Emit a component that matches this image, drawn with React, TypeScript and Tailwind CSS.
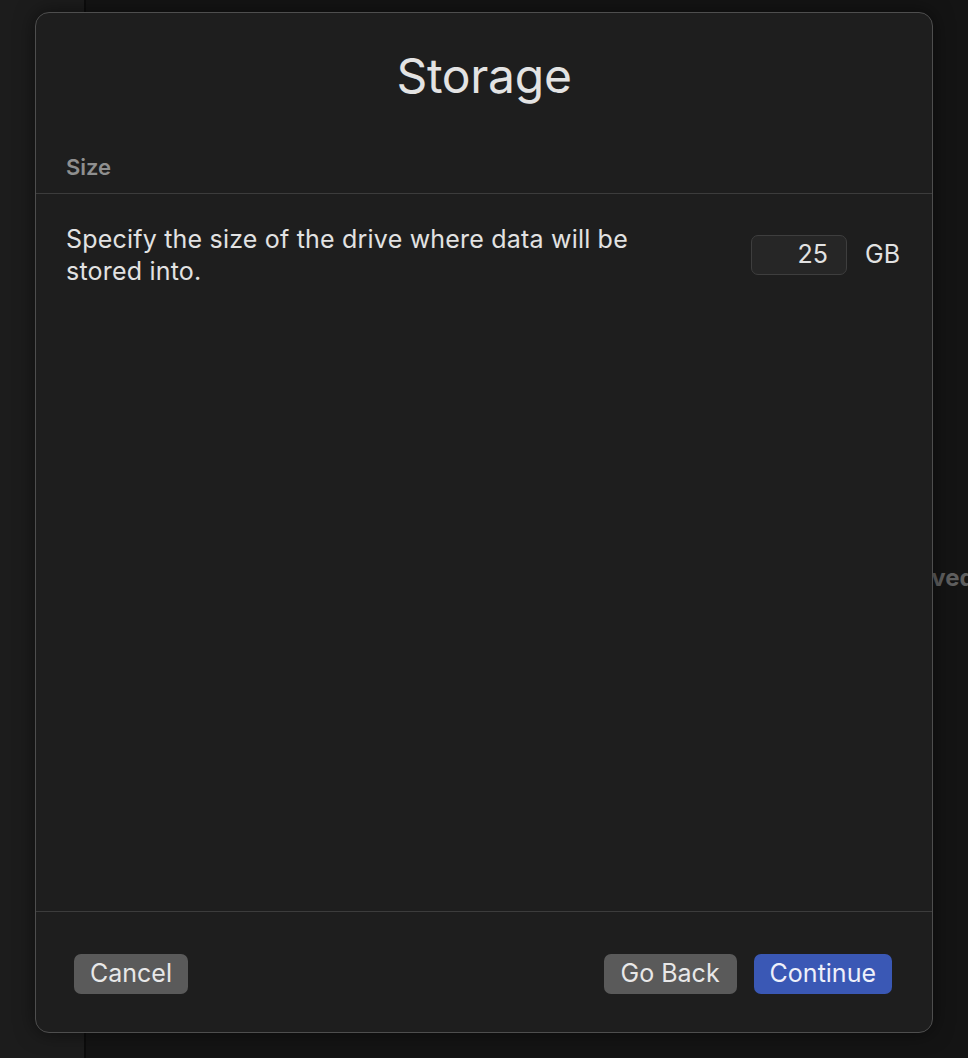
export default function App() {
  const font = { fontFamily: 'Inter, "Noto Sans", sans-serif' };
  return (
    <div className="relative w-[968px] h-[1058px] overflow-hidden bg-[#141414]" style={font}>
      <div className="flex h-full">
        <div className="w-[84px] h-full bg-[#1c1c1c]" />
        <div className="w-[2px] h-full bg-[#0c0c0c]" />
        <div className="flex-1 h-full relative">
          <span className="absolute left-[816px] top-[563px] text-[24px] leading-[30px] font-bold text-[#5f5f5f] whitespace-nowrap">Saved</span>
        </div>
      </div>

      <div className="absolute left-[35px] top-[12px] w-[898px] h-[1021px] rounded-[14px] border border-[#4e4e4e] bg-[#1e1e1e] flex flex-col shadow-[0_0_20px_rgba(0,0,0,0.5)]">
        <div className="flex justify-center pt-[39px]">
          <h1 className="text-[48px] leading-[48px] text-[#e3e3e3] tracking-[-0.3px]">Storage</h1>
        </div>
        <div className="px-[30px] pt-[53px] pb-[12px]">
          <span className="block text-[22px] leading-[28px] font-semibold text-[#8f8f8f]">Size</span>
        </div>
        <div className="h-px bg-[#3c3c3c]" />
        <div className="flex-1">
          <div className="flex items-center justify-between px-[30px] pt-[29px]">
            <p className="w-[590px] text-[25px] leading-[32px] tracking-[0.2px] text-[#e2e2e2]">
              Specify the size of the drive where data will be stored into.
            </p>
            <div className="flex items-center gap-[18px]">
              <div className="w-[96px] h-[40px] rounded-[7px] border border-[#3e3e3e] bg-[#262626] flex items-center justify-end pr-[18px] text-[25px] text-[#e2e2e2]">
                25
              </div>
              <span className="text-[25px] text-[#e2e2e2] mr-[2px]">GB</span>
            </div>
          </div>
        </div>
        <div className="h-px bg-[#3c3c3c]" />
        <div className="h-[120px] flex items-center justify-between px-[38px] pt-[3px]">
          <button className="h-[40px] px-[16px] rounded-[7px] bg-[#5a5a5a] text-[25px] text-[#e8e8e8]">Cancel</button>
          <div className="flex gap-[17px] mr-[2px]">
            <button className="h-[40px] px-[17px] rounded-[7px] bg-[#5a5a5a] text-[25px] text-[#e8e8e8]">Go Back</button>
            <button className="h-[40px] px-[16px] rounded-[7px] bg-[#3a58b5] text-[25px] text-[#eef0fa]">Continue</button>
          </div>
        </div>
      </div>
    </div>
  );
}
